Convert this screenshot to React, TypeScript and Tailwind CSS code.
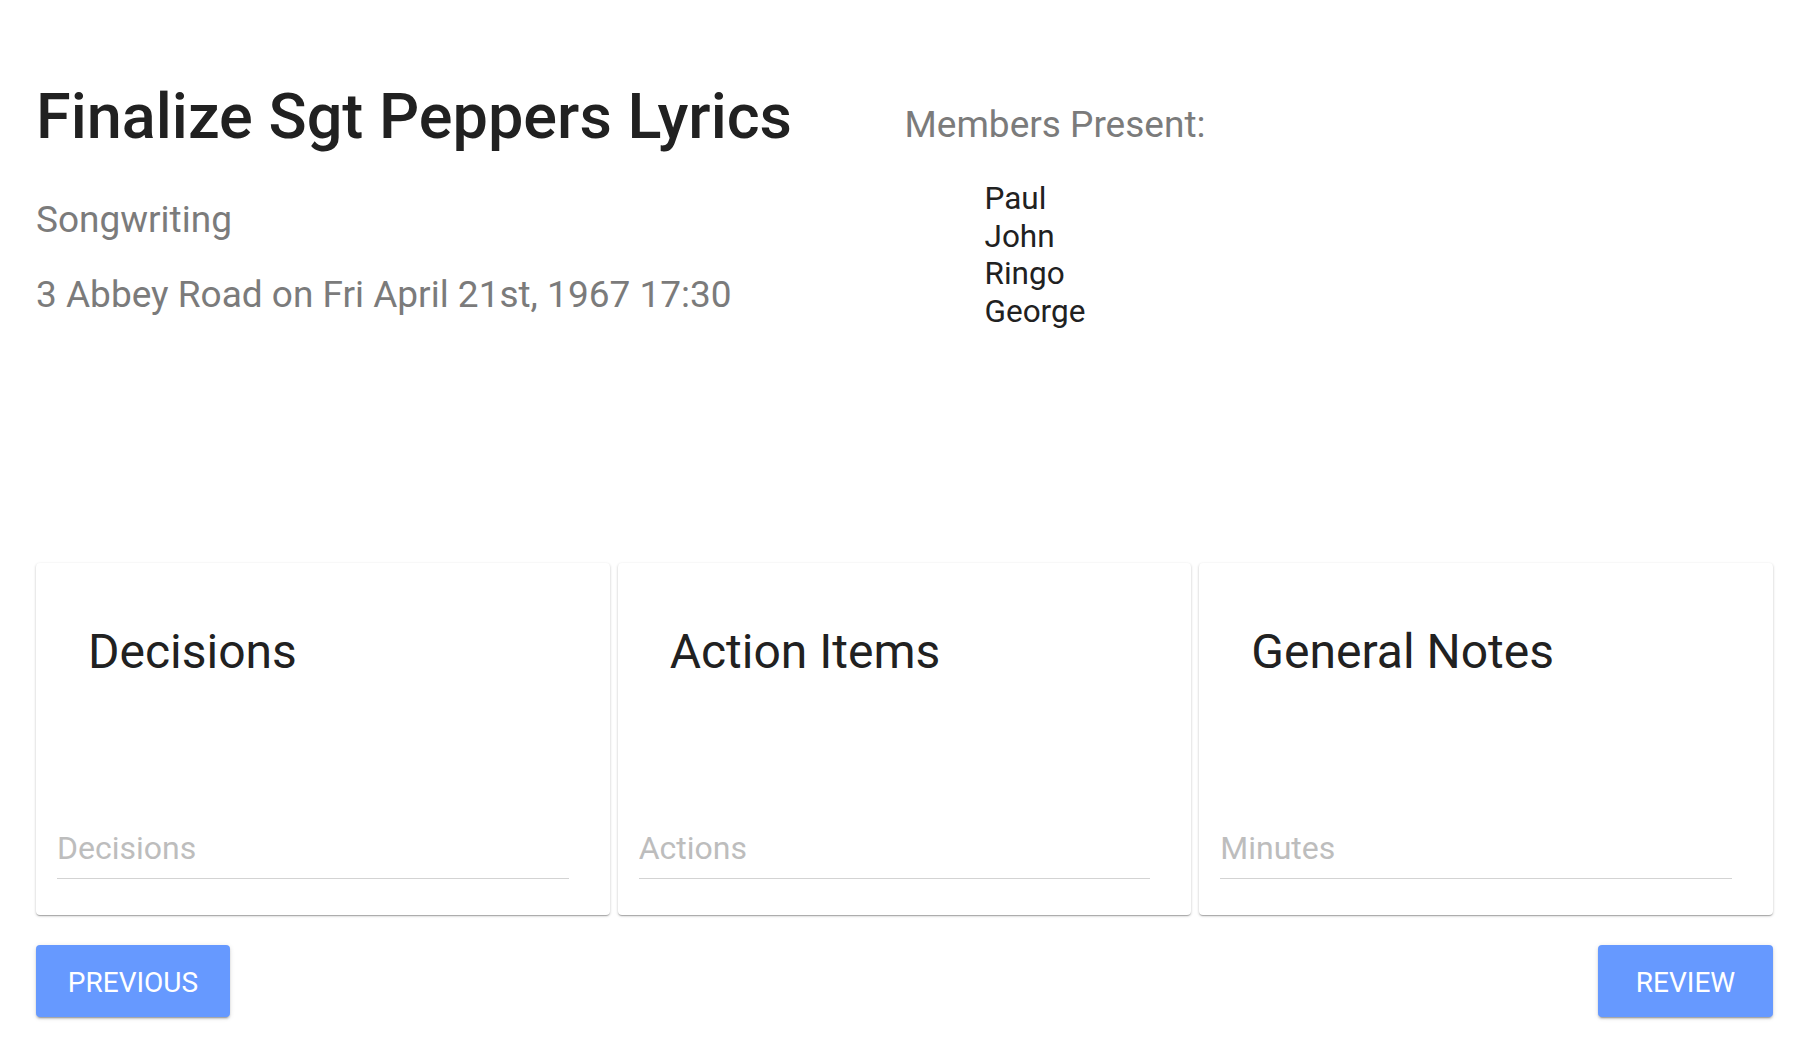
import React from 'react'

const members = ['Paul', 'John', 'Ringo', 'George']

const sections = [
  { title: 'Decisions', placeholder: 'Decisions' },
  { title: 'Action Items', placeholder: 'Actions' },
  { title: 'General Notes', placeholder: 'Minutes' },
]

function NoteCard({ title, placeholder }: { title: string; placeholder: string }) {
  return (
    <div className="flex flex-col justify-between bg-white rounded-[4px] shadow-[0_1px_3px_rgba(0,0,0,0.2),0_1px_1px_rgba(0,0,0,0.14),0_2px_1px_-1px_rgba(0,0,0,0.12)]">
      <h2 className="pt-[65px] pl-[52px] text-[48px] leading-none font-normal text-[#212121]">
        {title}
      </h2>
      <div className="pl-[21px] pr-[41px] mb-[36px]">
        <input
          type="text"
          placeholder={placeholder}
          className="w-full h-[50px] pb-[11px] text-[32px] text-[#212121] placeholder:text-[#bdbdbd] bg-transparent border-b border-[#d3d3d3] outline-none"
        />
      </div>
    </div>
  )
}

export default function App() {
  return (
    <div className="min-h-screen bg-white px-[36px] font-['Roboto','Liberation_Sans',sans-serif]">
      {/* Header */}
      <div className="grid grid-cols-2 h-[563px] pt-[85px]">
        <div>
          <h1 className="text-[63px] leading-none font-medium text-[#212121]">
            Finalize Sgt Peppers Lyrics
          </h1>
          <p className="mt-[53px] text-[37px] leading-none text-[#7b7b7b]">Songwriting</p>
          <p className="mt-[38px] text-[37px] leading-none text-[#7b7b7b]">
            3 Abbey Road on Fri April 21st, 1967 17:30
          </p>
        </div>
        <div>
          <p className="mt-[21px] text-[37px] leading-none text-[#7b7b7b]">Members Present:</p>
          <ul className="mt-[37px] pl-[80px] text-[31.5px] leading-[37.7px] text-[#212121]">
            {members.map(m => (
              <li key={m}>{m}</li>
            ))}
          </ul>
        </div>
      </div>

      {/* Notes */}
      <div className="grid grid-cols-3 gap-[8px] h-[352px]">
        {sections.map(s => (
          <NoteCard key={s.title} title={s.title} placeholder={s.placeholder} />
        ))}
      </div>

      {/* Navigation */}
      <div className="mt-[30px] flex justify-between">
        <button className="w-[194px] h-[72px] pt-[4px] rounded-[4px] bg-[#6699ff] text-white text-[28px] shadow-[0_3px_1px_-2px_rgba(0,0,0,0.2),0_2px_2px_0_rgba(0,0,0,0.14),0_1px_5px_0_rgba(0,0,0,0.12)]">
          PREVIOUS
        </button>
        <button className="w-[175px] h-[72px] pt-[4px] rounded-[4px] bg-[#6699ff] text-white text-[28px] shadow-[0_3px_1px_-2px_rgba(0,0,0,0.2),0_2px_2px_0_rgba(0,0,0,0.14),0_1px_5px_0_rgba(0,0,0,0.12)]">
          REVIEW
        </button>
      </div>
    </div>
  )
}
